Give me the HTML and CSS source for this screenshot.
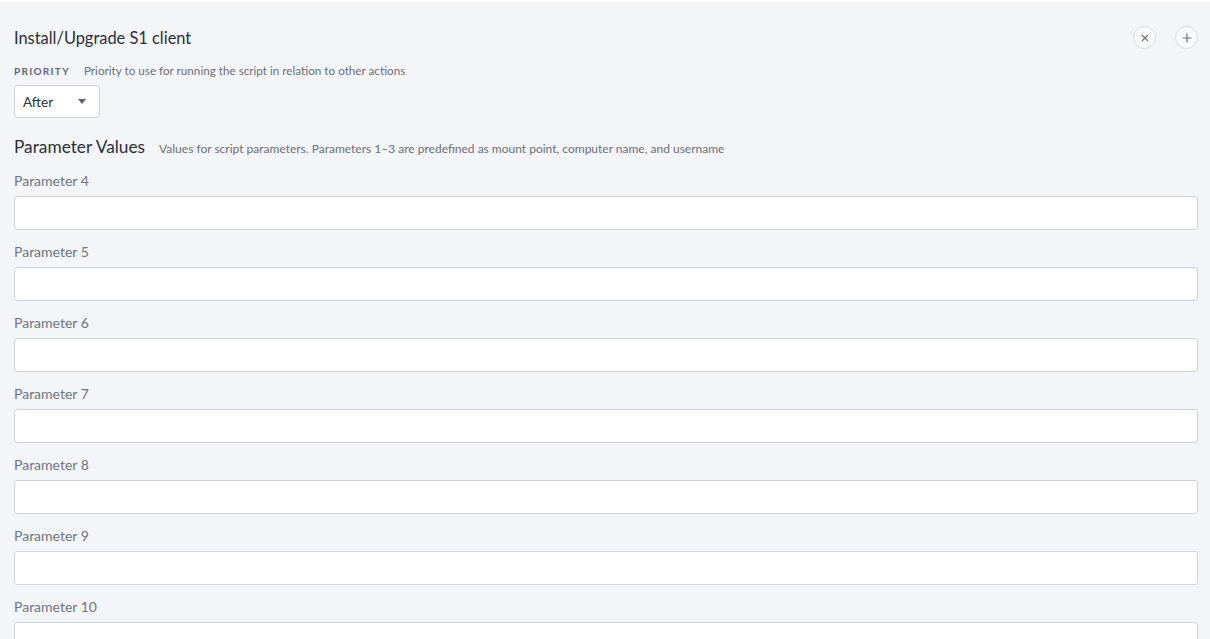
FILE: index.html
```html
<!DOCTYPE html>
<html lang="en">
<head>
    <meta charset="UTF-8">
    <title>Install/Upgrade S1 client</title>
    <link rel="stylesheet" href="styles.css">
</head>
<body>
    <div class="panel">
        <div class="panel-head">
            <h2 class="panel-title">Install/Upgrade S1 client</h2>
            <div class="head-actions">
                <button class="round-btn" type="button" aria-label="Remove">
                    <svg width="8" height="8" viewBox="0 0 8 8"><path d="M1 1L7 7M7 1L1 7" stroke="#6b6f7a" stroke-width="1.2"/></svg>
                </button>
                <button class="round-btn" type="button" aria-label="Add">
                    <svg width="10" height="10" viewBox="0 0 10 10"><path d="M5 0.5V9.5M0.5 5H9.5" stroke="#6b6f7a" stroke-width="1.2"/></svg>
                </button>
            </div>
        </div>

        <div class="priority">
            <div class="field-caption">
                <span class="caps">Priority</span>
                <span class="hint">Priority to use for running the script in relation to other actions</span>
            </div>
            <div class="select">
                <span>After</span>
                <svg width="8" height="5" viewBox="0 0 8 5"><path d="M0 0H8L4 5Z" fill="#5f6470"/></svg>
            </div>
        </div>

        <div class="section-head">
            <h3>Parameter Values</h3>
            <span class="hint wide">Values for script parameters. Parameters 1–3 are predefined as mount point, computer name, and username</span>
        </div>

        <div class="param-list">
            <label class="param"><span>Parameter 4</span><input type="text"></label>
            <label class="param"><span>Parameter 5</span><input type="text"></label>
            <label class="param"><span>Parameter 6</span><input type="text"></label>
            <label class="param"><span>Parameter 7</span><input type="text"></label>
            <label class="param"><span>Parameter 8</span><input type="text"></label>
            <label class="param"><span>Parameter 9</span><input type="text"></label>
            <label class="param"><span>Parameter 10</span><input type="text"></label>
        </div>
    </div>
</body>
</html>
```

FILE: styles.css
```css
body {
    margin: 0;
    padding-top: 2px;
    background: #ffffff;
    font-family: 'Lato', 'Open Sans', sans-serif;
    color: #2b2f38;
}
.panel {
    background: #f4f5f9;
    padding: 24px 12px 0 14px;
    height: 637px;
    box-sizing: border-box;
    overflow: hidden;
}
.panel-head {
    display: flex;
    justify-content: space-between;
    align-items: center;
    height: 23px;
}
.panel-title {
    margin: 0;
    font-size: 16.4px;
    font-weight: 400;
    color: #2b2f38;
}
.head-actions {
    display: flex;
    gap: 19px;
}
.round-btn {
    width: 23px;
    height: 23px;
    border-radius: 50%;
    border: 1px solid #d6d8de;
    background: #fbfbfd;
    padding: 0;
    display: flex;
    align-items: center;
    justify-content: center;
}
.priority {
    margin-top: 14px;
}
.field-caption {
    display: flex;
    align-items: baseline;
    gap: 14px;
    height: 16px;
}
.caps {
    font-size: 10px;
    font-weight: 700;
    letter-spacing: 1.3px;
    text-transform: uppercase;
    color: #5d6577;
}
.hint {
    font-size: 11.7px;
    color: #6b6f78;
}
.hint.wide {
    font-size: 12px;
}
.select {
    margin-top: 6px;
    width: 86px;
    height: 33px;
    box-sizing: border-box;
    border: 1px solid #cfd2d9;
    border-radius: 3px;
    background: #fff;
    display: flex;
    align-items: center;
    justify-content: space-between;
    padding: 0 13px 0 8px;
    font-size: 13.5px;
    color: #2b2f38;
}
.section-head {
    margin-top: 18px;
    height: 20px;
    display: flex;
    align-items: baseline;
    gap: 14px;
}
.section-head h3 {
    margin: 0;
    font-size: 17.3px;
    font-weight: 400;
    color: #2b2f38;
}
.param-list {
    margin-top: 17px;
    display: flex;
    flex-direction: column;
    gap: 14px;
}
.param {
    display: flex;
    flex-direction: column;
    gap: 7px;
}
.param span {
    font-size: 14px;
    line-height: 16px;
    height: 16px;
    color: #6e7481;
}
.param input {
    height: 34px;
    box-sizing: border-box;
    border: 1px solid #cfd2d9;
    border-radius: 3px;
    background: #fff;
    margin: 0;
}
```
